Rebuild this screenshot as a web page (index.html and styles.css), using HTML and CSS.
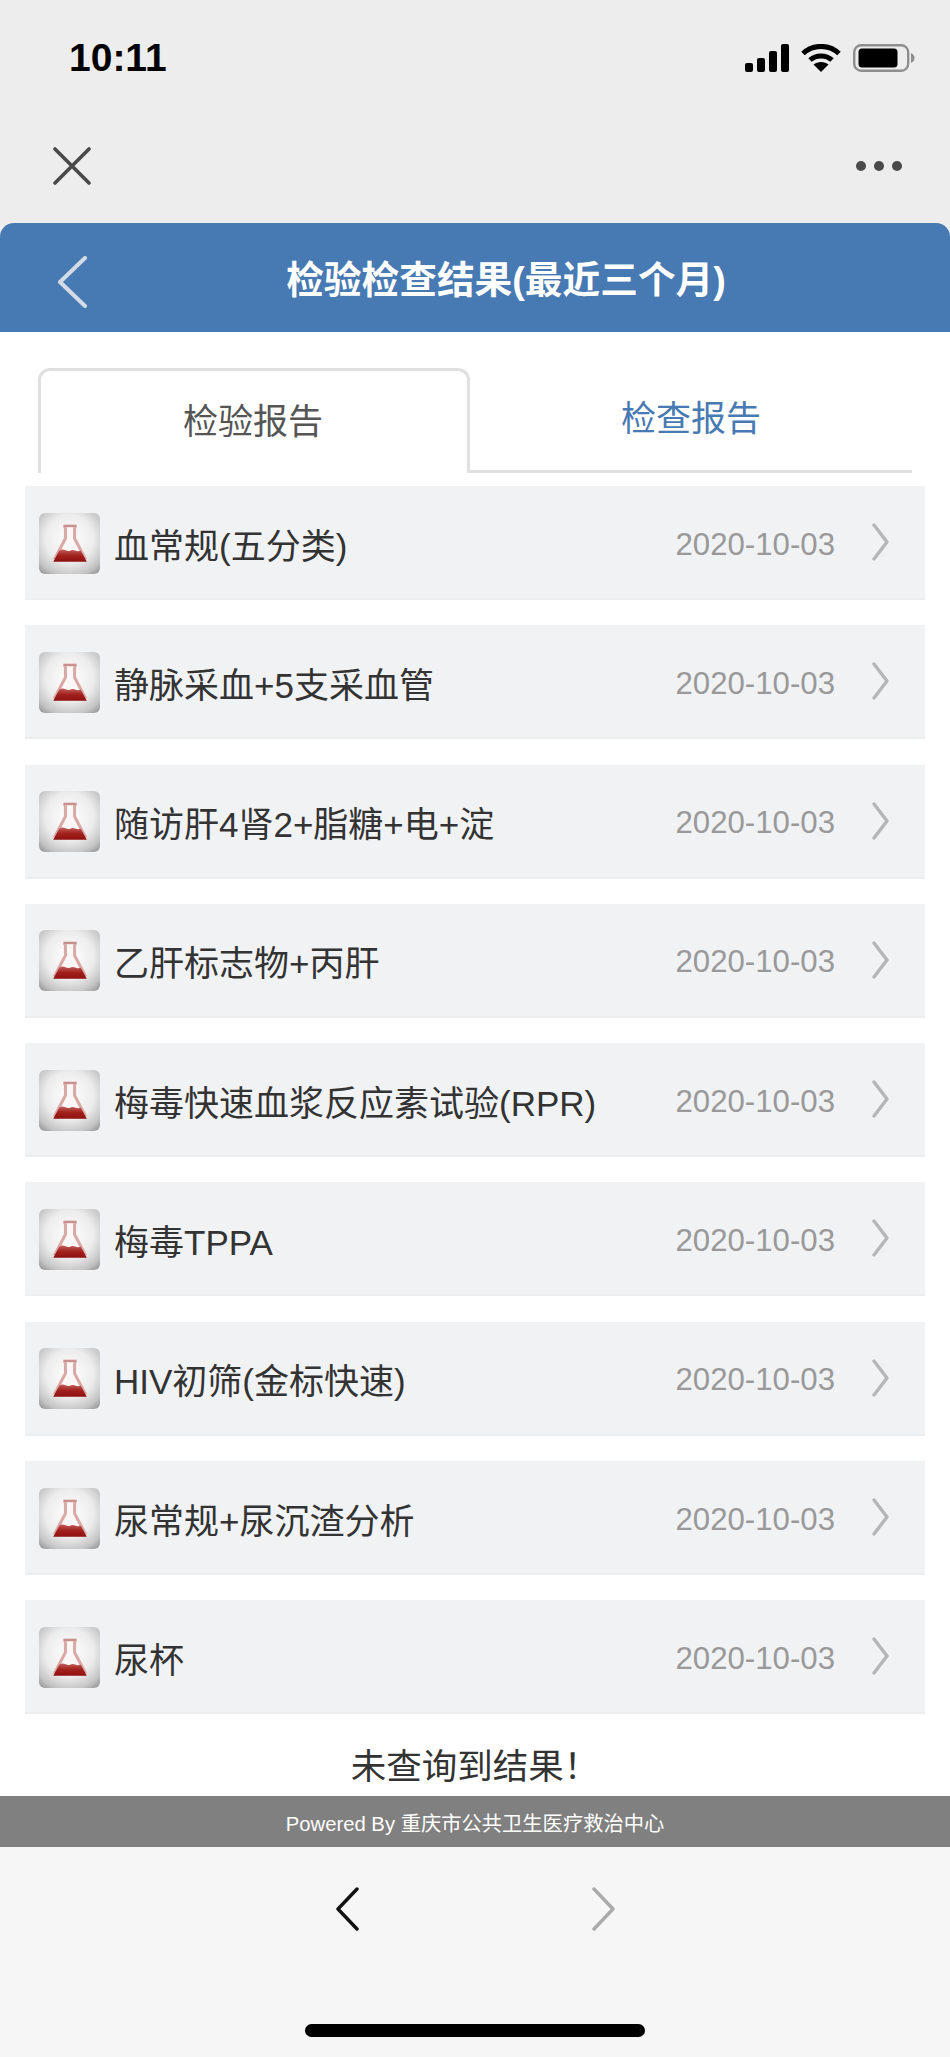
FILE: index.html
```html
<!DOCTYPE html>
<html lang="zh-CN">
<head>
    <meta charset="UTF-8">
    <title>检验检查结果</title>
    <link rel="stylesheet" href="styles.css">
</head>
<body>
    <svg class="defs" width="0" height="0">
        <defs>
            <radialGradient id="tileBg" cx="50%" cy="42%" r="72%">
                <stop offset="0%" stop-color="#ffffff"/>
                <stop offset="55%" stop-color="#ececec"/>
                <stop offset="85%" stop-color="#c4c4c4"/>
                <stop offset="100%" stop-color="#9c9c9c"/>
            </radialGradient>
            <linearGradient id="flaskFill" x1="0" y1="0" x2="0" y2="1">
                <stop offset="0%" stop-color="#c2605c"/>
                <stop offset="45%" stop-color="#a32320"/>
                <stop offset="100%" stop-color="#8f100e"/>
            </linearGradient>
            <filter id="soft" x="-10%" y="-10%" width="120%" height="120%">
                <feGaussianBlur stdDeviation="0.7"/>
            </filter>
            <symbol id="flask" viewBox="0 0 60 60">
                <rect width="60" height="60" rx="6" fill="url(#tileBg)"/>
                <g filter="url(#soft)">
                    <path d="M24 13H37" stroke="#c98f8c" stroke-width="3" fill="none"/>
                    <path d="M26 14V25L16 44H45L35 25V14" stroke="#d9a9a6" stroke-width="3" fill="#fbf7f6"/>
                    <path d="M20 37C25 34 27 39 31 37C34 35 37 39 41 37L47 48H14Z" fill="url(#flaskFill)"/>
                </g>
            </symbol>
            <symbol id="chevron" viewBox="0 0 17 38">
                <path d="M2 2L15 19L2 36" fill="none" stroke="#b5b6b8" stroke-width="3.4" stroke-linecap="round" stroke-linejoin="round"/>
            </symbol>
        </defs>
    </svg>

    <div class="page">
        <div class="wechat-top">
            <div class="status-bar">
                <span class="time">10:11</span>
                <div class="status-icons">
                    <svg width="44" height="28" viewBox="0 0 44 28">
                        <rect x="0" y="19" width="8" height="9" rx="2"/>
                        <rect x="12" y="14" width="8" height="14" rx="2"/>
                        <rect x="24" y="7" width="8" height="21" rx="2"/>
                        <rect x="36" y="0" width="8" height="28" rx="2"/>
                    </svg>
                    <svg width="40" height="28" viewBox="0 0 40 28">
                        <path d="M2 9.5C12 0 28 0 38 9.5" fill="none" stroke="#000" stroke-width="5"/>
                        <path d="M9 16C15 10.5 25 10.5 31 16" fill="none" stroke="#000" stroke-width="5"/>
                        <path d="M20 28L12.5 20.5C16.5 17 23.5 17 27.5 20.5Z"/>
                    </svg>
                    <svg width="62" height="28" viewBox="0 0 62 28">
                        <rect x="1.2" y="1.2" width="54" height="25.6" rx="7" fill="none" stroke="#8e8e8e" stroke-width="2.4"/>
                        <rect x="5.5" y="4.5" width="39" height="19" rx="3.5"/>
                        <path d="M58 9C60.5 10 61.5 12 61.5 14C61.5 16 60.5 18 58 19Z" fill="#8e8e8e"/>
                    </svg>
                </div>
            </div>
            <div class="toolbar">
                <svg width="38" height="38" viewBox="0 0 38 38">
                    <path d="M2 2L36 36M36 2L2 36" stroke="#4a4a4a" stroke-width="3.6" stroke-linecap="round"/>
                </svg>
                <div class="more"><i></i><i></i><i></i></div>
            </div>
        </div>

        <header class="app-header">
            <svg class="header-back" width="30" height="52" viewBox="0 0 30 52">
                <path d="M28 2L3 26L28 50" fill="none" stroke="#d3dbe6" stroke-width="4" stroke-linecap="round" stroke-linejoin="round"/>
            </svg>
            <h1>检验检查结果(最近三个月)</h1>
        </header>

        <main class="content">
            <div class="tabs">
                <div class="tab active">检验报告</div>
                <div class="tab">检查报告</div>
            </div>

            <ul class="report-list">
                <li class="report"><svg class="tile"><use href="#flask"/></svg><span class="name">血常规(五分类)</span><span class="date">2020-10-03</span><svg class="arrow"><use href="#chevron"/></svg></li>
                <li class="report"><svg class="tile"><use href="#flask"/></svg><span class="name">静脉采血+5支采血管</span><span class="date">2020-10-03</span><svg class="arrow"><use href="#chevron"/></svg></li>
                <li class="report"><svg class="tile"><use href="#flask"/></svg><span class="name">随访肝4肾2+脂糖+电+淀</span><span class="date">2020-10-03</span><svg class="arrow"><use href="#chevron"/></svg></li>
                <li class="report"><svg class="tile"><use href="#flask"/></svg><span class="name">乙肝标志物+丙肝</span><span class="date">2020-10-03</span><svg class="arrow"><use href="#chevron"/></svg></li>
                <li class="report"><svg class="tile"><use href="#flask"/></svg><span class="name">梅毒快速血浆反应素试验(RPR)</span><span class="date">2020-10-03</span><svg class="arrow"><use href="#chevron"/></svg></li>
                <li class="report"><svg class="tile"><use href="#flask"/></svg><span class="name">梅毒TPPA</span><span class="date">2020-10-03</span><svg class="arrow"><use href="#chevron"/></svg></li>
                <li class="report"><svg class="tile"><use href="#flask"/></svg><span class="name">HIV初筛(金标快速)</span><span class="date">2020-10-03</span><svg class="arrow"><use href="#chevron"/></svg></li>
                <li class="report"><svg class="tile"><use href="#flask"/></svg><span class="name">尿常规+尿沉渣分析</span><span class="date">2020-10-03</span><svg class="arrow"><use href="#chevron"/></svg></li>
                <li class="report"><svg class="tile"><use href="#flask"/></svg><span class="name">尿杯</span><span class="date">2020-10-03</span><svg class="arrow"><use href="#chevron"/></svg></li>
            </ul>

            <p class="no-result">未查询到结果！</p>
        </main>

        <div class="powered">Powered By 重庆市公共卫生医疗救治中心</div>

        <div class="bottom-nav">
            <div class="nav-arrows">
                <svg width="24" height="44" viewBox="0 0 24 44">
                    <path d="M22 2L3 22L22 42" fill="none" stroke="#111" stroke-width="3.4" stroke-linecap="round" stroke-linejoin="round"/>
                </svg>
                <svg width="24" height="44" viewBox="0 0 24 44">
                    <path d="M2 2L21 22L2 42" fill="none" stroke="#aaa" stroke-width="3.4" stroke-linecap="round" stroke-linejoin="round"/>
                </svg>
            </div>
            <div class="home-bar"></div>
        </div>
    </div>
</body>
</html>
```

FILE: styles.css
```css
* {
    box-sizing: border-box;
}
html, body {
    margin: 0;
    padding: 0;
}
body {
    font-family: "Liberation Sans", "Noto Sans CJK SC", sans-serif;
    background-color: #ededed;
    color: #333;
}
.defs {
    display: block;
    height: 0;
}
.page {
    width: 950px;
    height: 2057px;
    display: flex;
    flex-direction: column;
    overflow: hidden;
}

/* top of the phone and wechat bar */
.wechat-top {
    height: 223px;
    background-color: #ededed;
}
.status-bar {
    height: 116px;
    padding: 0 35px 0 69px;
    display: flex;
    justify-content: space-between;
    align-items: center;
}
.time {
    font-size: 39px;
    font-weight: bold;
    color: #000;
}
.status-icons {
    display: flex;
    align-items: center;
    gap: 12px;
}
.toolbar {
    height: 107px;
    padding: 0 48px 7px 53px;
    display: flex;
    justify-content: space-between;
    align-items: center;
}
.more {
    display: flex;
    gap: 8px;
}
.more i {
    width: 10px;
    height: 10px;
    border-radius: 50%;
    background-color: #4a4a4a;
}

/* blue title bar */
.app-header {
    position: relative;
    height: 109px;
    padding-left: 62px;
    background-color: #4779b2;
    border-radius: 14px 14px 0 0;
    display: flex;
    justify-content: center;
    align-items: center;
}
.app-header h1 {
    margin: 0 0 2px;
    font-size: 37.7px;
    font-weight: bold;
    color: #fff;
}
.header-back {
    position: absolute;
    left: 57px;
    top: 33px;
}

/* tabs and list */
.content {
    flex: 1;
    background-color: #fff;
    padding: 36px 25px 0 25px;
}
.tabs {
    display: flex;
    margin: 0 13px 0 13px;
    height: 105px;
}
.tab {
    font-size: 35px;
    display: flex;
    justify-content: center;
    align-items: center;
    padding-bottom: 8px;
    color: #4779b2;
    flex: 1;
    border-bottom: 3px solid #e0e0e0;
}
.tab.active {
    flex: 0 0 432px;
    padding-right: 2px;
    color: #555;
    border: 3px solid #e0e0e0;
    border-bottom: none;
    border-radius: 12px 12px 0 0;
}
.report-list {
    list-style: none;
    margin: 13px 0 0;
    padding: 0;
    display: flex;
    flex-direction: column;
    gap: 25.3px;
}
.report {
    height: 114px;
    background-color: #f1f2f4;
    border-bottom: 2px solid #ecedee;
    padding: 0 0 0 14px;
    display: flex;
    align-items: center;
}
.tile {
    width: 61px;
    height: 61px;
    flex: none;
    margin: 2px 14px 0 0;
}
.name {
    flex: 1;
    padding-top: 2px;
    font-size: 35px;
    color: #333;
}
.date {
    padding-top: 5px;
    font-size: 31.2px;
    color: #999;
}
.arrow {
    width: 17px;
    height: 38px;
    flex: none;
    margin: 0 36px 0 37px;
}
.no-result {
    margin: 33px 0 0;
    text-align: center;
    font-size: 35.5px;
    line-height: 40px;
    color: #333;
}

/* footer */
.powered {
    height: 51px;
    background-color: #808080;
    color: #fff;
    font-size: 20.3px;
    display: flex;
    justify-content: center;
    align-items: center;
}
.bottom-nav {
    height: 210px;
    background-color: #f6f6f6;
    display: flex;
    flex-direction: column;
    align-items: center;
}
.nav-arrows {
    margin-top: 40px;
    display: flex;
    gap: 233px;
}
.home-bar {
    margin-top: 93px;
    width: 340px;
    height: 13px;
    border-radius: 7px;
    background-color: #000;
}
```
